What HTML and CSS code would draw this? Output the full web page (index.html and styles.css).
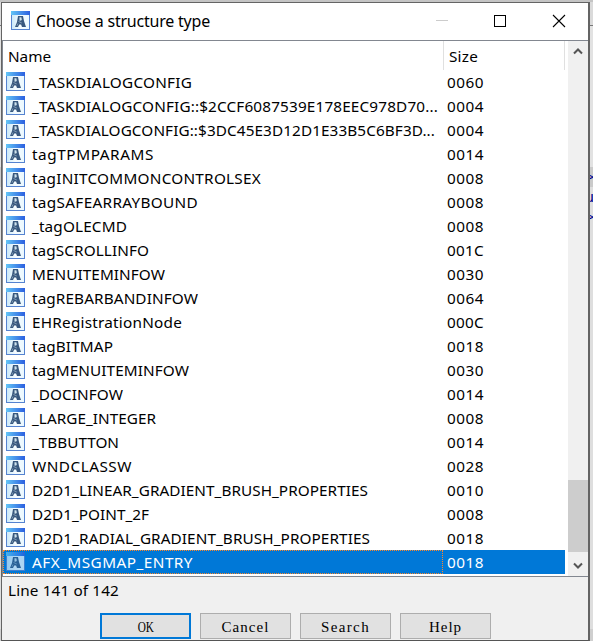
FILE: index.html
```
<!DOCTYPE html>
<html lang="en">
<head>
<meta charset="utf-8">
<title>Choose a structure type</title>
<link rel="stylesheet" href="styles.css">
</head>
<body>
<svg class="defs" width="0" height="0">
  <defs>
    <linearGradient id="bar" x1="0" x2="1"><stop offset="0" stop-color="#63c6f6"/><stop offset="1" stop-color="#2b5fe0"/></linearGradient>
    <linearGradient id="paper" x1="0" x2="1"><stop offset="0" stop-color="#c9e8f8"/><stop offset=".5" stop-color="#f6fcff"/><stop offset="1" stop-color="#eaf8ff"/></linearGradient>
    <symbol id="struct" viewBox="0 0 19 19">
      <rect x=".5" y=".5" width="18" height="18" fill="url(#paper)" stroke="#5583d0"/>
      <path d="M0 0h19v4H0z" fill="url(#bar)"/>
      <path d="M7 5h5l1 5 2 6h-4l-.9-2.500H8.200L7 16H4l2-5z" fill="#38587e"/>
      <path d="M8.700 6.500h1.500l.4 2.500-1.800.5zM7.500 10.500l3.300 1.500M7 12.500l-1 2.200" fill="#d9eaf3" stroke="#b4cbd9" stroke-width=".6"/>
    </symbol>
  </defs>
</svg>
<div class="behind"><span>&gt;</span><span>u</span><span>&gt;</span></div>
<main class="dialog">
  <header class="title">
    <svg class="icon"><use href="#struct"/></svg>
    <h1 data-w="174">Choose a structure type</h1>
    <svg class="controls" width="132" height="14" viewBox="0 0 132 14" fill="none">
      <path d="M0 6.500h12" stroke="#ccc"/>
      <rect x="58.500" y="1.500" width="11" height="11" stroke="#000"/>
      <path d="M117 1l12 12M129 1L117 13" stroke="#000" stroke-width="1.100"/>
    </svg>
  </header>
  <section class="list">
    <div class="table">
      <div class="head"><div class="c1"><span data-w="43">Name</span></div><div class="c2"><span data-w="29">Size</span></div></div>
      <div id="rows"></div>
    </div>
    <div class="scroll">
      <svg width="10" height="7" viewBox="0 0 10 7"><path d="M1 5.500l4-4 4 4" fill="none" stroke="#555" stroke-width="2"/></svg>
      <div class="thumb"></div>
      <svg width="10" height="7" viewBox="0 0 10 7"><path d="M1 1.500l4 4 4-4" fill="none" stroke="#555" stroke-width="2"/></svg>
    </div>
  </section>
  <div class="status"><span data-w="111">Line 141 of 142</span></div>
  <footer class="buttons">
    <button class="primary"><span class="narrow">OK</span></button><button><span data-w="48">Cancel</span></button><button><span data-w="49">Search</span></button><button><span data-w="33">Help</span></button>
  </footer>
</main>
<script src="rows.js"></script>
</body>
</html>
```
FILE: styles.css
```
* { box-sizing: border-box; }
body {
  margin: 0;
  width: 593px;
  height: 641px;
  overflow: hidden;
  padding: 2px 0 0 1px;
  background: linear-gradient(#c4c4c4 0 2px, #dadada 2px 25px, #777 25px 26px, #e2e2e2 26px 167px, #cacaca 167px 187px, #dedede 187px 629px, #cfcfcf 629px);
  font: 15.3px/22px "Noto Sans", sans-serif;
  color: #000;
}
.defs { position: absolute; }
.behind {
  position: absolute;
  left: 585px;
  top: 169px;
  display: flex;
  flex-direction: column;
  font: 15px/20px "Liberation Mono", monospace;
  color: #00008b;
}
.dialog {
  position: relative;
  width: 589px;
  height: 639px;
  border: 1px solid #646464;
  border-right-width: 2px;
  border-bottom: 1px solid #555;
  background: #f0f0f0;
  display: flex;
  flex-direction: column;
}
.title {
  height: 37px;
  flex: none;
  background: #fff;
  display: flex;
  align-items: center;
  padding: 0 20px 0 9px;
}
.icon { width: 19px; height: 19px; flex: none; display: block; }
.title .icon { margin-top: -2px; }
h1 { font: inherit; font-size: 16px; margin: -1px 0 0 6px; white-space: nowrap; }
.controls { margin-left: auto; margin-top: -2px; }
.list {
  height: 537px;
  flex: none;
  border: 1px solid #828790;
  background: #fff;
  display: flex;
  justify-content: space-between;
}
.table { width: 562px; }
.head { display: flex; height: 29px; line-height: 30px; }
.head .c1 { width: 441px; padding-left: 5px; border-right: 1px solid #e0e0e0; }
.head .c2 { width: 121px; padding-left: 5px; border-right: 1px solid #e0e0e0; }
.row { display: flex; height: 24px; white-space: nowrap; }
.row .c1 {
  width: 440px;
  display: flex;
  align-items: flex-start;
  padding-left: 2px;
  border: 1px dotted transparent;
}
.row .icon { margin-top: 1px; }
.row .c1 span { margin-left: 7px; }
.row .c2 { padding: 1px 0 0 4px; }
.row.selected { background: #0078d7; color: #fff; }
.row.selected .c1 { border-color: #ff8728; }
.row.selected .icon { background: #0078d7; }
.row.selected .icon use { opacity: .72; }
.scroll {
  width: 20px;
  margin-right: -1px;
  background: #f0f0f0;
  display: flex;
  flex-direction: column;
  align-items: center;
  padding: 7px 0 7px;
}
.thumb { width: 20px; height: 72px; background: #cdcdcd; margin: auto 0 10px; }
.status { height: 36px; flex: none; padding: 2px 0 0 6px; }
.buttons { display: flex; gap: 9px; padding-left: 98px; }
button {
  width: 91px;
  height: 26px;
  padding: 2px 0 0;
  border: 1px solid #adadad;
  background: #e1e1e1;
  font: 15px/18px "Liberation Serif", serif;
  color: #000;
}
button.primary { border: 2px solid #0078d7; padding-top: 1px; }
.narrow { display: inline-block; transform: scaleX(.75); }
```
FILE: rows.js
```
// name, size, width of the name in pixels
const data = [
  ["_TASKDIALOGCONFIG", "0060", 160],
  ["_TASKDIALOGCONFIG::$2CCF6087539E178EEC978D70...", "0004", 406],
  ["_TASKDIALOGCONFIG::$3DC45E3D12D1E33B5C6BF3D...", "0004", 403],
  ["tagTPMPARAMS", "0014", 122],
  ["tagINITCOMMONCONTROLSEX", "0008", 229],
  ["tagSAFEARRAYBOUND", "0008", 166],
  ["_tagOLECMD", "0008", 95],
  ["tagSCROLLINFO", "001C", 117],
  ["MENUITEMINFOW", "0030", 133],
  ["tagREBARBANDINFOW", "0064", 166],
  ["EHRegistrationNode", "000C", 150],
  ["tagBITMAP", "0018", 81],
  ["tagMENUITEMINFOW", "0030", 157],
  ["_DOCINFOW", "0014", 91],
  ["_LARGE_INTEGER", "0008", 124],
  ["_TBBUTTON", "0014", 87],
  ["WNDCLASSW", "0028", 100],
  ["D2D1_LINEAR_GRADIENT_BRUSH_PROPERTIES", "0010", 336],
  ["D2D1_POINT_2F", "0008", 117],
  ["D2D1_RADIAL_GRADIENT_BRUSH_PROPERTIES", "0018", 338],
  ["AFX_MSGMAP_ENTRY", "0018", 161]
];
document.getElementById("rows").innerHTML = data.map(([name, size, w], i) =>
  `<div class="row${i === data.length - 1 ? " selected" : ""}"><div class="c1"><svg class="icon"><use href="#struct"/></svg><span data-w="${w}">${name}</span></div><div class="c2"><span data-w="37">${size}</span></div></div>`
).join("");
// spread the letters so that each label fills its width
document.querySelectorAll("[data-w]").forEach(el => {
  const range = document.createRange();
  range.selectNodeContents(el);
  const natural = range.getBoundingClientRect().width;
  el.style.letterSpacing = (el.dataset.w - natural) / el.textContent.length + "px";
});
```
